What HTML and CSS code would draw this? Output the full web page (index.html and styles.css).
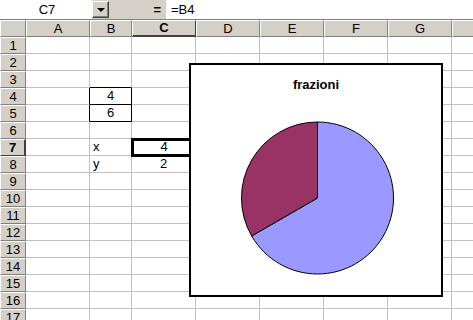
FILE: index.html
```html
<!DOCTYPE html>
<html>
<head>
<meta charset="utf-8">
<link rel="stylesheet" href="styles.css">
</head>
<body>
<div class="app">
  <div class="fbar">
    <div class="namebox">C7</div>
    <div class="ddbtn"><span class="tri"></span></div>
    <div class="eqzone"><span class="eq">=</span></div>
    <div class="formula">=B4</div>
  </div>
  <div class="sheet">
    <div class="hdr corner"></div>
    <div class="hdr col">A</div>
    <div class="hdr col">B</div>
    <div class="hdr col sel">C</div>
    <div class="hdr col">D</div>
    <div class="hdr col">E</div>
    <div class="hdr col">F</div>
    <div class="hdr col">G</div>
    <div class="hdr col last"></div>

    <div class="hdr row">1</div><div class="c"></div><div class="c"></div><div class="c"></div><div class="c"></div><div class="c"></div><div class="c"></div><div class="c"></div><div class="c"></div>
    <div class="hdr row">2</div><div class="c"></div><div class="c"></div><div class="c"></div><div class="c"></div><div class="c"></div><div class="c"></div><div class="c"></div><div class="c"></div>
    <div class="hdr row">3</div><div class="c"></div><div class="c bb"></div><div class="c"></div><div class="c"></div><div class="c"></div><div class="c"></div><div class="c"></div><div class="c"></div>
    <div class="hdr row">4</div><div class="c br"></div><div class="c box">4</div><div class="c"></div><div class="c"></div><div class="c"></div><div class="c"></div><div class="c"></div><div class="c"></div>
    <div class="hdr row">5</div><div class="c br"></div><div class="c box">6</div><div class="c"></div><div class="c"></div><div class="c"></div><div class="c"></div><div class="c"></div><div class="c"></div>
    <div class="hdr row">6</div><div class="c"></div><div class="c"></div><div class="c bb"></div><div class="c"></div><div class="c"></div><div class="c"></div><div class="c"></div><div class="c"></div>
    <div class="hdr row sel">7</div><div class="c"></div><div class="c br l">x</div><div class="c active">4</div><div class="c"></div><div class="c"></div><div class="c"></div><div class="c"></div><div class="c"></div>
    <div class="hdr row">8</div><div class="c"></div><div class="c l">y</div><div class="c ctr">2</div><div class="c"></div><div class="c"></div><div class="c"></div><div class="c"></div><div class="c"></div>
    <div class="hdr row">9</div><div class="c"></div><div class="c"></div><div class="c"></div><div class="c"></div><div class="c"></div><div class="c"></div><div class="c"></div><div class="c"></div>
    <div class="hdr row">10</div><div class="c"></div><div class="c"></div><div class="c"></div><div class="c"></div><div class="c"></div><div class="c"></div><div class="c"></div><div class="c"></div>
    <div class="hdr row">11</div><div class="c"></div><div class="c"></div><div class="c"></div><div class="c"></div><div class="c"></div><div class="c"></div><div class="c"></div><div class="c"></div>
    <div class="hdr row">12</div><div class="c"></div><div class="c"></div><div class="c"></div><div class="c"></div><div class="c"></div><div class="c"></div><div class="c"></div><div class="c"></div>
    <div class="hdr row">13</div><div class="c"></div><div class="c"></div><div class="c"></div><div class="c"></div><div class="c"></div><div class="c"></div><div class="c"></div><div class="c"></div>
    <div class="hdr row">14</div><div class="c"></div><div class="c"></div><div class="c"></div><div class="c"></div><div class="c"></div><div class="c"></div><div class="c"></div><div class="c"></div>
    <div class="hdr row">15</div><div class="c"></div><div class="c"></div><div class="c"></div><div class="c"></div><div class="c"></div><div class="c"></div><div class="c"></div><div class="c"></div>
    <div class="hdr row">16</div><div class="c"></div><div class="c"></div><div class="c"></div><div class="c"></div><div class="c"></div><div class="c"></div><div class="c"></div><div class="c"></div>
    <div class="hdr row">17</div><div class="c"></div><div class="c"></div><div class="c"></div><div class="c"></div><div class="c"></div><div class="c"></div><div class="c"></div><div class="c"></div>

    <div class="chart">
      <div class="ctitle">frazioni</div>
      <svg class="pie" width="250" height="230" viewBox="0 0 250 230">
        <path d="M126.5 133 L126.5 57 A76 76 0 1 1 60.68 171 Z" fill="#9999ff" stroke="#000" stroke-width="1"/>
        <path d="M126.5 133 L60.68 171 A76 76 0 0 1 126.5 57 Z" fill="#993366" stroke="#000" stroke-width="1"/>
      </svg>
    </div>
  </div>
</div>
</body>
</html>
```
FILE: styles.css
```css
* { box-sizing: border-box; }
html, body { margin: 0; padding: 0; }
body {
  width: 473px;
  height: 320px;
  overflow: hidden;
  background: #ffffff;
  font-family: "Liberation Sans", Arial, sans-serif;
  font-size: 13px;
  color: #000;
}
.app { width: 473px; height: 320px; overflow: hidden; }

.fbar {
  display: flex;
  height: 20px;
  background: #d4d0c8;
  border-bottom: 1px solid #808080;
}
.namebox {
  width: 92px;
  height: 19px;
  background: #fff;
  text-align: center;
  line-height: 19px;
  padding-left: 2px;
}
.ddbtn {
  width: 17px;
  height: 17px;
  margin-top: 1px;
  background: #d4d0c8;
  border-top: 1px solid #fff;
  border-left: 1px solid #fff;
  border-right: 1px solid #404040;
  border-bottom: 1px solid #404040;
  box-shadow: inset -1px -1px 0 #808080;
  display: flex;
  align-items: center;
  justify-content: center;
}
.tri {
  width: 0; height: 0;
  border-left: 4px solid transparent;
  border-right: 4px solid transparent;
  border-top: 4px solid #000;
  margin-top: 1px;
}
.eqzone {
  width: 57px;
  display: flex;
  justify-content: flex-end;
  padding-right: 5px;
}
.eq { font-weight: bold; line-height: 19px; }
.formula {
  flex: 1;
  height: 19px;
  background: #fff;
  line-height: 19px;
  padding-left: 5px;
}

.sheet {
  position: relative;
  display: grid;
  grid-template-columns: 26px 64px 42px 64px 64px 64px 64px 64px 64px;
  grid-template-rows: 17px repeat(17, 17px);
}
.hdr {
  background: #d4d0c8;
  border-top: 1px solid #fff;
  border-left: 1px solid #fff;
  border-right: 1px solid #808080;
  border-bottom: 1px solid #808080;
  text-align: center;
  line-height: 15px;
  font-size: 13px;
}
.hdr.corner { border-right: 1px solid #808080; }
.hdr.col.sel {
  font-weight: bold;
  border-bottom: 2px solid #404040;
  border-right: 1px solid #404040;
  line-height: 14px;
}
.hdr.row.sel {
  font-weight: bold;
  border-right: 2px solid #404040;
  border-bottom: 1px solid #404040;
}
.c {
  border-right: 1px solid #c0c0c0;
  border-bottom: 1px solid #c0c0c0;
  line-height: 16px;
  text-align: center;
}
.c.l { text-align: left; padding-left: 3px; }
.c.ctr { text-align: center; }
.c.bb { border-bottom-color: #000; }
.c.br { border-right-color: #000; }
.c.box {
  border-right: 1px solid #000;
  border-bottom: 1px solid #000;
}
.c.active {
  position: relative;
  border: none;
  box-shadow: inset 0 0 0 1px #c0c0c0;
  outline: 3px solid #000;
  outline-offset: -2px;
  z-index: 1;
}

.chart {
  position: absolute;
  left: 189px;
  top: 43px;
  width: 254px;
  height: 234px;
  background: #fff;
  border: 2px solid #000;
  z-index: 2;
}
.ctitle {
  text-align: center;
  font-weight: bold;
  font-size: 13px;
  margin-top: 12px;
  line-height: 16px;
}
.pie {
  position: absolute;
  left: 0;
  top: 0;
}
```
